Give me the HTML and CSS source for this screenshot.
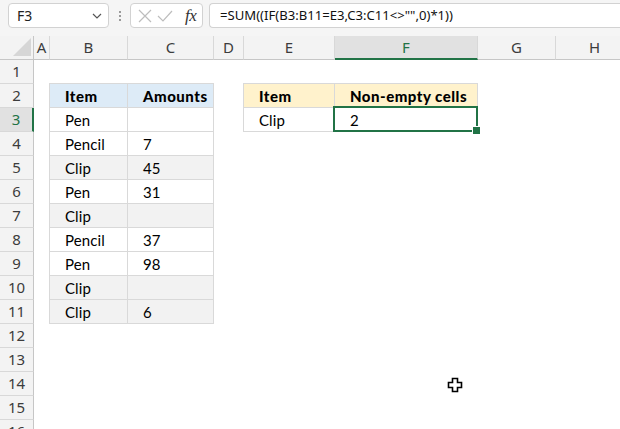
FILE: index.html
```html
<!DOCTYPE html>
<html>
<head>
<meta charset="utf-8">
<link rel="stylesheet" href="styles.css">
</head>
<body>
<div class="app">
  <div class="toolbar">
    <div class="namebox">
      <span class="name">F3</span>
      <svg class="chev" width="10" height="6" viewBox="0 0 10 6"><path d="M1 1 L5 5 L9 1" fill="none" stroke="#555" stroke-width="1.2"/></svg>
    </div>
    <div class="dots">
      <span></span><span></span><span></span>
    </div>
    <div class="btnbox">
      <svg width="14" height="14" viewBox="0 0 14 14"><path d="M1 1 L13 13 M13 1 L1 13" stroke="#bdbdbd" stroke-width="1.2" fill="none"/></svg>
      <svg width="16" height="14" viewBox="0 0 16 14"><path d="M1 7 L6 12 L15 2" stroke="#bdbdbd" stroke-width="1.2" fill="none"/></svg>
      <span class="fx">fx</span>
    </div>
    <div class="formula">=SUM((IF(B3:B11=E3,C3:C11&lt;&gt;"",0)*1))</div>
  </div>

  <div class="sheet">
    <div class="corner"><svg width="18" height="18" viewBox="0 0 18 18"><polygon points="18,0 18,18 0,18" fill="#d6d6d6"/></svg></div>
    <div class="ch">A</div>
    <div class="ch">B</div>
    <div class="ch">C</div>
    <div class="ch">D</div>
    <div class="ch">E</div>
    <div class="ch sel-col">F</div>
    <div class="ch">G</div>
    <div class="ch">H</div>

    <div class="rh r1">1</div>
    <div class="rh r2">2</div>
    <div class="rh r3 sel-row">3</div>
    <div class="rh r4">4</div>
    <div class="rh r5">5</div>
    <div class="rh r6">6</div>
    <div class="rh r7">7</div>
    <div class="rh r8">8</div>
    <div class="rh r9">9</div>
    <div class="rh r10">10</div>
    <div class="rh r11">11</div>
    <div class="rh r12">12</div>
    <div class="rh r13">13</div>
    <div class="rh r14">14</div>
    <div class="rh r15">15</div>
    <div class="rh r16">16</div>

    <div class="cell r2 cB hd-blue top left">Item</div>
    <div class="cell r2 cC hd-blue top">Amounts</div>
    <div class="cell r3 cB left">Pen</div>
    <div class="cell r3 cC"></div>
    <div class="cell r4 cB left">Pencil</div>
    <div class="cell r4 cC">7</div>
    <div class="cell r5 cB left shade">Clip</div>
    <div class="cell r5 cC shade">45</div>
    <div class="cell r6 cB left">Pen</div>
    <div class="cell r6 cC">31</div>
    <div class="cell r7 cB left shade">Clip</div>
    <div class="cell r7 cC shade"></div>
    <div class="cell r8 cB left">Pencil</div>
    <div class="cell r8 cC">37</div>
    <div class="cell r9 cB left">Pen</div>
    <div class="cell r9 cC">98</div>
    <div class="cell r10 cB left shade">Clip</div>
    <div class="cell r10 cC shade"></div>
    <div class="cell r11 cB left shade">Clip</div>
    <div class="cell r11 cC shade">6</div>

    <div class="cell r2 cE hd-yellow top left">Item</div>
    <div class="cell r2 cF hd-yellow top">Non-empty cells</div>
    <div class="cell r3 cE left">Clip</div>
    <div class="cell r3 cF active">2</div>
  </div>

  <svg class="cursor" width="16" height="16" viewBox="0 0 16 16"><polygon points="5.5,1.5 10.5,1.5 10.5,5.5 14.5,5.5 14.5,10.5 10.5,10.5 10.5,14.5 5.5,14.5 5.5,10.5 1.5,10.5 1.5,5.5 5.5,5.5" fill="#fff" stroke="#000" stroke-width="1.6"/></svg>
</div>
</body>
</html>
```

FILE: styles.css
```css
* { box-sizing: border-box; }
html, body { margin: 0; padding: 0; }
body {
  width: 620px;
  height: 429px;
  overflow: hidden;
  background: #fff;
  font-family: "Noto Sans", "Open Sans", sans-serif;
}
.app { position: relative; width: 620px; height: 429px; overflow: hidden; }

.toolbar {
  height: 36px;
  background: #f5f5f5;
  display: flex;
  align-items: flex-start;
  padding: 3px 0 0 8px;
}
.namebox {
  width: 101px;
  height: 25px;
  background: #fff;
  border: 1px solid #d2d2d2;
  border-radius: 4px;
  display: flex;
  align-items: center;
  justify-content: space-between;
  padding: 0 6px 0 8px;
}
.name { font-size: 14px; color: #222; }
.dots {
  width: 21px;
  height: 25px;
  display: flex;
  flex-direction: column;
  align-items: center;
  justify-content: center;
  gap: 2px;
}
.dots span { width: 2px; height: 2px; background: #9a9a9a; display: block; }
.btnbox {
  width: 73px;
  height: 25px;
  background: #fff;
  border: 1px solid #d2d2d2;
  border-radius: 4px;
  display: flex;
  align-items: center;
  padding: 0 4px 0 7px;
  gap: 5px;
}
.fx {
  font-family: "Liberation Serif", "DejaVu Serif", serif;
  font-style: italic;
  font-size: 17px;
  color: #333;
  margin-left: 7px;
  letter-spacing: -0.5px;
}
.formula {
  margin-left: 6px;
  flex: 1;
  height: 25px;
  background: #fff;
  border: 1px solid #d2d2d2;
  border-right: none;
  border-radius: 4px 0 0 4px;
  font-size: 13.1px;
  line-height: 23px;
  padding-left: 10px;
  color: #111;
  white-space: nowrap;
}

.sheet {
  display: grid;
  grid-template-columns: 34px 16px 78px 86px 30px 91px 143px 78px 78px;
  grid-template-rows: 24px repeat(16, 24px);
  width: max-content;
}
.corner {
  grid-row: 1; grid-column: 1;
  background: #f3f3f3;
  border-right: 1px solid #c6c6c6;
  border-bottom: 1px solid #c6c6c6;
  display: flex;
  align-items: flex-end;
  justify-content: flex-end;
  padding: 0 2px 3px 0;
}
.ch {
  grid-row: 1;
  background: #f3f3f3;
  border-right: 1px solid #d8d8d8;
  border-bottom: 1px solid #c6c6c6;
  font-size: 15px;
  color: #3c3c3c;
  text-align: center;
  line-height: 23px;
}
.ch.sel-col {
  background: #e1e1e1;
  color: #217346;
  border-bottom: 2px solid #217346;
}
.rh {
  grid-column: 1;
  background: #f3f3f3;
  border-right: 1px solid #c6c6c6;
  border-bottom: 1px solid #d8d8d8;
  font-size: 15px;
  color: #3c3c3c;
  text-align: center;
  line-height: 23px;
}
.rh.sel-row {
  background: #e1e1e1;
  color: #217346;
  border-right: 2px solid #217346;
}

.r1 { grid-row: 2; }
.r2 { grid-row: 3; }
.r3 { grid-row: 4; }
.r4 { grid-row: 5; }
.r5 { grid-row: 6; }
.r6 { grid-row: 7; }
.r7 { grid-row: 8; }
.r8 { grid-row: 9; }
.r9 { grid-row: 10; }
.r10 { grid-row: 11; }
.r11 { grid-row: 12; }
.r12 { grid-row: 13; }
.r13 { grid-row: 14; }
.r14 { grid-row: 15; }
.r15 { grid-row: 16; }
.r16 { grid-row: 17; }
.cB { grid-column: 3; }
.cC { grid-column: 4; }
.cE { grid-column: 6; }
.cF { grid-column: 7; }

.cell {
  font-family: "Lato", "Carlito", sans-serif;
  font-size: 15px;
  color: #000;
  line-height: 23px;
  padding: 1px 0 0 15px;
  border-right: 1px solid #d9d9d9;
  border-bottom: 1px solid #d9d9d9;
  white-space: nowrap;
  background: #fff;
  letter-spacing: 0.1px;
}
.cell.top { box-shadow: 0 -1px 0 #d9d9d9; }
.cell.left { box-shadow: -1px 0 0 #d9d9d9; }
.cell.top.left { box-shadow: 0 -1px 0 #d9d9d9, -1px 0 0 #d9d9d9, -1px -1px 0 #d9d9d9; }
.hd-blue { background: #ddebf7; font-weight: 900; letter-spacing: 0.5px; }
.hd-yellow { background: #fff2cc; font-weight: 900; letter-spacing: 0.5px; }
.shade { background: #f2f2f2; }

.active { position: relative; }
.active::after {
  content: "";
  position: absolute;
  top: -2px; left: -2px; right: -1px; bottom: -1px;
  border: 2px solid #217346;
}
.active::before {
  content: "";
  position: absolute;
  right: -4px; bottom: -4px;
  width: 7px; height: 7px;
  background: #217346;
  border: 1px solid #fff;
  z-index: 2;
}

.cursor { position: absolute; left: 447px; top: 377px; }
```
